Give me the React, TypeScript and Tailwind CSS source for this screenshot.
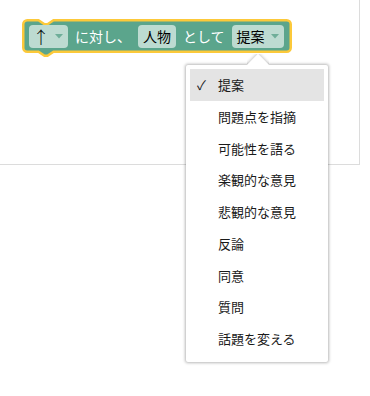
import React from "react"

const options = [
  "提案",
  "問題点を指摘",
  "可能性を語る",
  "楽観的な意見",
  "悲観的な意見",
  "反論",
  "同意",
  "質問",
  "話題を変える",
]

const Caret = () => (
  <svg width="8" height="5" viewBox="0 0 8 5" className="shrink-0">
    <path d="M0 0 H8 L4 4.5 Z" fill="#6fae99" />
  </svg>
)

const Field = ({ children, dropdown }: { children: React.ReactNode; dropdown?: boolean }) => (
  <div className="flex h-[23px] items-center gap-[6px] rounded-[4px] bg-[#bddbd1] px-[5px] text-[14px] leading-none text-black">
    <span>{children}</span>
    {dropdown && <Caret />}
  </div>
)

const App = () => {
  return (
    <div
      className="relative h-[396px] w-[370px] bg-white"
      style={{ fontFamily: '"Noto Sans CJK JP", "Noto Sans", sans-serif' }}
    >
      {/* workspace */}
      <div className="h-[165px] w-[360px] border-r border-b border-[#dcdcdc] pt-[19px] pl-[22px]">
        <div className="relative h-[34px] w-[270px]">
          <svg width="272" height="40" viewBox="0 0 272 40" className="absolute top-0 left-0">
            <path
              d="M1.25 5.25 a4 4 0 0 1 4 -4 H16.5 l6 4 h3 l6 -4 H264.75 a4 4 0 0 1 4 4 V28.75 a4 4 0 0 1 -4 4 H31.5 l-6 4 h-3 l-6 -4 H5.25 a4 4 0 0 1 -4 -4 Z"
              fill="#5ba58c"
              stroke="#fcc93a"
              strokeWidth="2.5"
            />
          </svg>
          <div className="relative flex h-[34px] items-center gap-[7px] pl-[7px] text-[14px] text-white">
            <div className="flex h-[23px] items-center gap-[5.5px] rounded-[4px] bg-[#bddbd1] pr-[5px] pl-[3.5px] leading-none text-black">
              <span className="text-[17px] font-extralight">↑</span>
              <Caret />
            </div>
            <span>に対し、</span>
            <Field>人物</Field>
            <span>として</span>
            <Field dropdown>提案</Field>
          </div>
        </div>
      </div>

      {/* dropdown menu */}
      <div className="absolute top-[65px] left-[186px] w-[142px]">
        <div className="relative rounded-[2px] bg-white px-[4px] pt-[4px] pb-[7px] shadow-[0_0_3px_1px_rgba(0,0,0,0.28)]">
          <ul className="flex flex-col text-[13px] text-[#1a1a1a]">
            {options.map((o, i) => (
              <li
                key={o}
                className={
                  i === 0
                    ? "flex h-[31.75px] items-center bg-[#e4e4e4] pl-[7px]"
                    : "flex h-[31.75px] items-center pl-[7px]"
                }
              >
                <span className="w-[21px]">{i === 0 ? "✓" : ""}</span>
                <span>{o}</span>
              </li>
            ))}
          </ul>
        </div>
        <div className="absolute top-[-11px] left-[61px] h-[11px] w-[22px] overflow-hidden">
          <div className="absolute top-[3px] left-[3px] h-[16px] w-[16px] rotate-45 bg-white shadow-[0_0_3px_1px_rgba(0,0,0,0.2)]" />
        </div>
      </div>
    </div>
  )
}

export default App
